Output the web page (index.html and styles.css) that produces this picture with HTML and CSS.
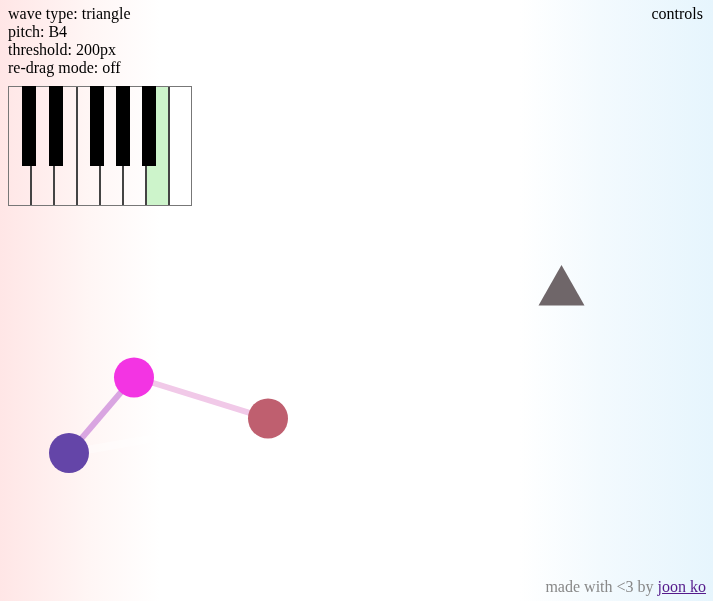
FILE: index.html
```html
<!DOCTYPE html>
<html>
<head>
<meta charset="utf-8">
<link rel="stylesheet" href="styles.css">
</head>
<body>
<svg class="canvas" width="713" height="601" viewBox="0 0 713 601">
  <line class="faint" x1="69" y1="453" x2="268" y2="418.5"/>
  <line class="edge-a" x1="134" y1="377" x2="69" y2="453"/>
  <line class="edge-b" x1="134" y1="377" x2="268" y2="418.5"/>
  <circle class="node-purple" cx="69" cy="453" r="20"/>
  <circle class="node-magenta" cx="134" cy="377.5" r="20"/>
  <circle class="node-rose" cx="268" cy="418.5" r="20"/>
  <polygon class="tri" points="561.5,265 538.5,305.5 584.5,305.5"/>
</svg>
<div class="top">
  <div class="info">
    <div>wave type: triangle</div>
    <div>pitch: B4</div>
    <div>threshold: 200px</div>
    <div>re-drag mode: off</div>
    <div class="piano">
      <div class="white"></div>
      <div class="white"></div>
      <div class="white"></div>
      <div class="white"></div>
      <div class="white"></div>
      <div class="white"></div>
      <div class="white active"></div>
      <div class="white"></div>
      <div class="black k1"></div>
      <div class="black k2"></div>
      <div class="black k3"></div>
      <div class="black k4"></div>
      <div class="black k5"></div>
    </div>
  </div>
  <div class="controls">controls</div>
</div>
<div class="footer">made with &lt;3 by <a href="#">joon ko</a></div>
</body>
</html>
```
FILE: styles.css
```css
html, body {
  height: 100%;
}
body {
  margin: 0;
  box-sizing: border-box;
  padding: 5px 7px 5px 8px;
  display: flex;
  flex-direction: column;
  font-family: "Liberation Serif", "Times New Roman", serif;
  font-size: 16px;
  color: #000;
  background: linear-gradient(to right, #ffe6e6 0px, #fff6f5 90px, #ffffff 160px, #ffffff 520px, #f3fafe 600px, #e6f5fd 713px);
  overflow: hidden;
}
.canvas {
  position: fixed;
  left: 0;
  top: 0;
  z-index: 0;
}
.faint {
  stroke: rgba(255, 255, 255, 0.4);
  stroke-width: 8;
}
.edge-a {
  stroke: #d9a5e1;
  stroke-width: 6;
}
.edge-b {
  stroke: #f1c9e8;
  stroke-width: 6;
}
.node-purple { fill: #6445a8; }
.node-magenta { fill: #f334e3; }
.node-rose { fill: #bf5f6f; }
.tri { fill: #6f6669; }

.top {
  position: relative;
  z-index: 1;
  display: flex;
  justify-content: space-between;
  align-items: flex-start;
}
.controls {
  margin-right: 3px;
}
.piano {
  position: relative;
  margin-top: 9px;
  width: 184px;
  height: 120px;
  box-sizing: border-box;
  border: 1px solid #777;
  display: flex;
}
.white {
  flex: 1;
}
.white + .white {
  border-left: 2px solid #444;
}
.white.active {
  background: #cdf4cb;
}
.black {
  position: absolute;
  top: -1px;
  width: 14px;
  height: 80px;
  background: #000;
}
.k1 { left: 13px; }
.k2 { left: 40px; }
.k3 { left: 81px; }
.k4 { left: 107px; }
.k5 { left: 133px; }

.footer {
  position: relative;
  z-index: 1;
  margin-top: auto;
  align-self: flex-end;
  color: #888;
}
.footer a {
  color: #551a8b;
}
```
